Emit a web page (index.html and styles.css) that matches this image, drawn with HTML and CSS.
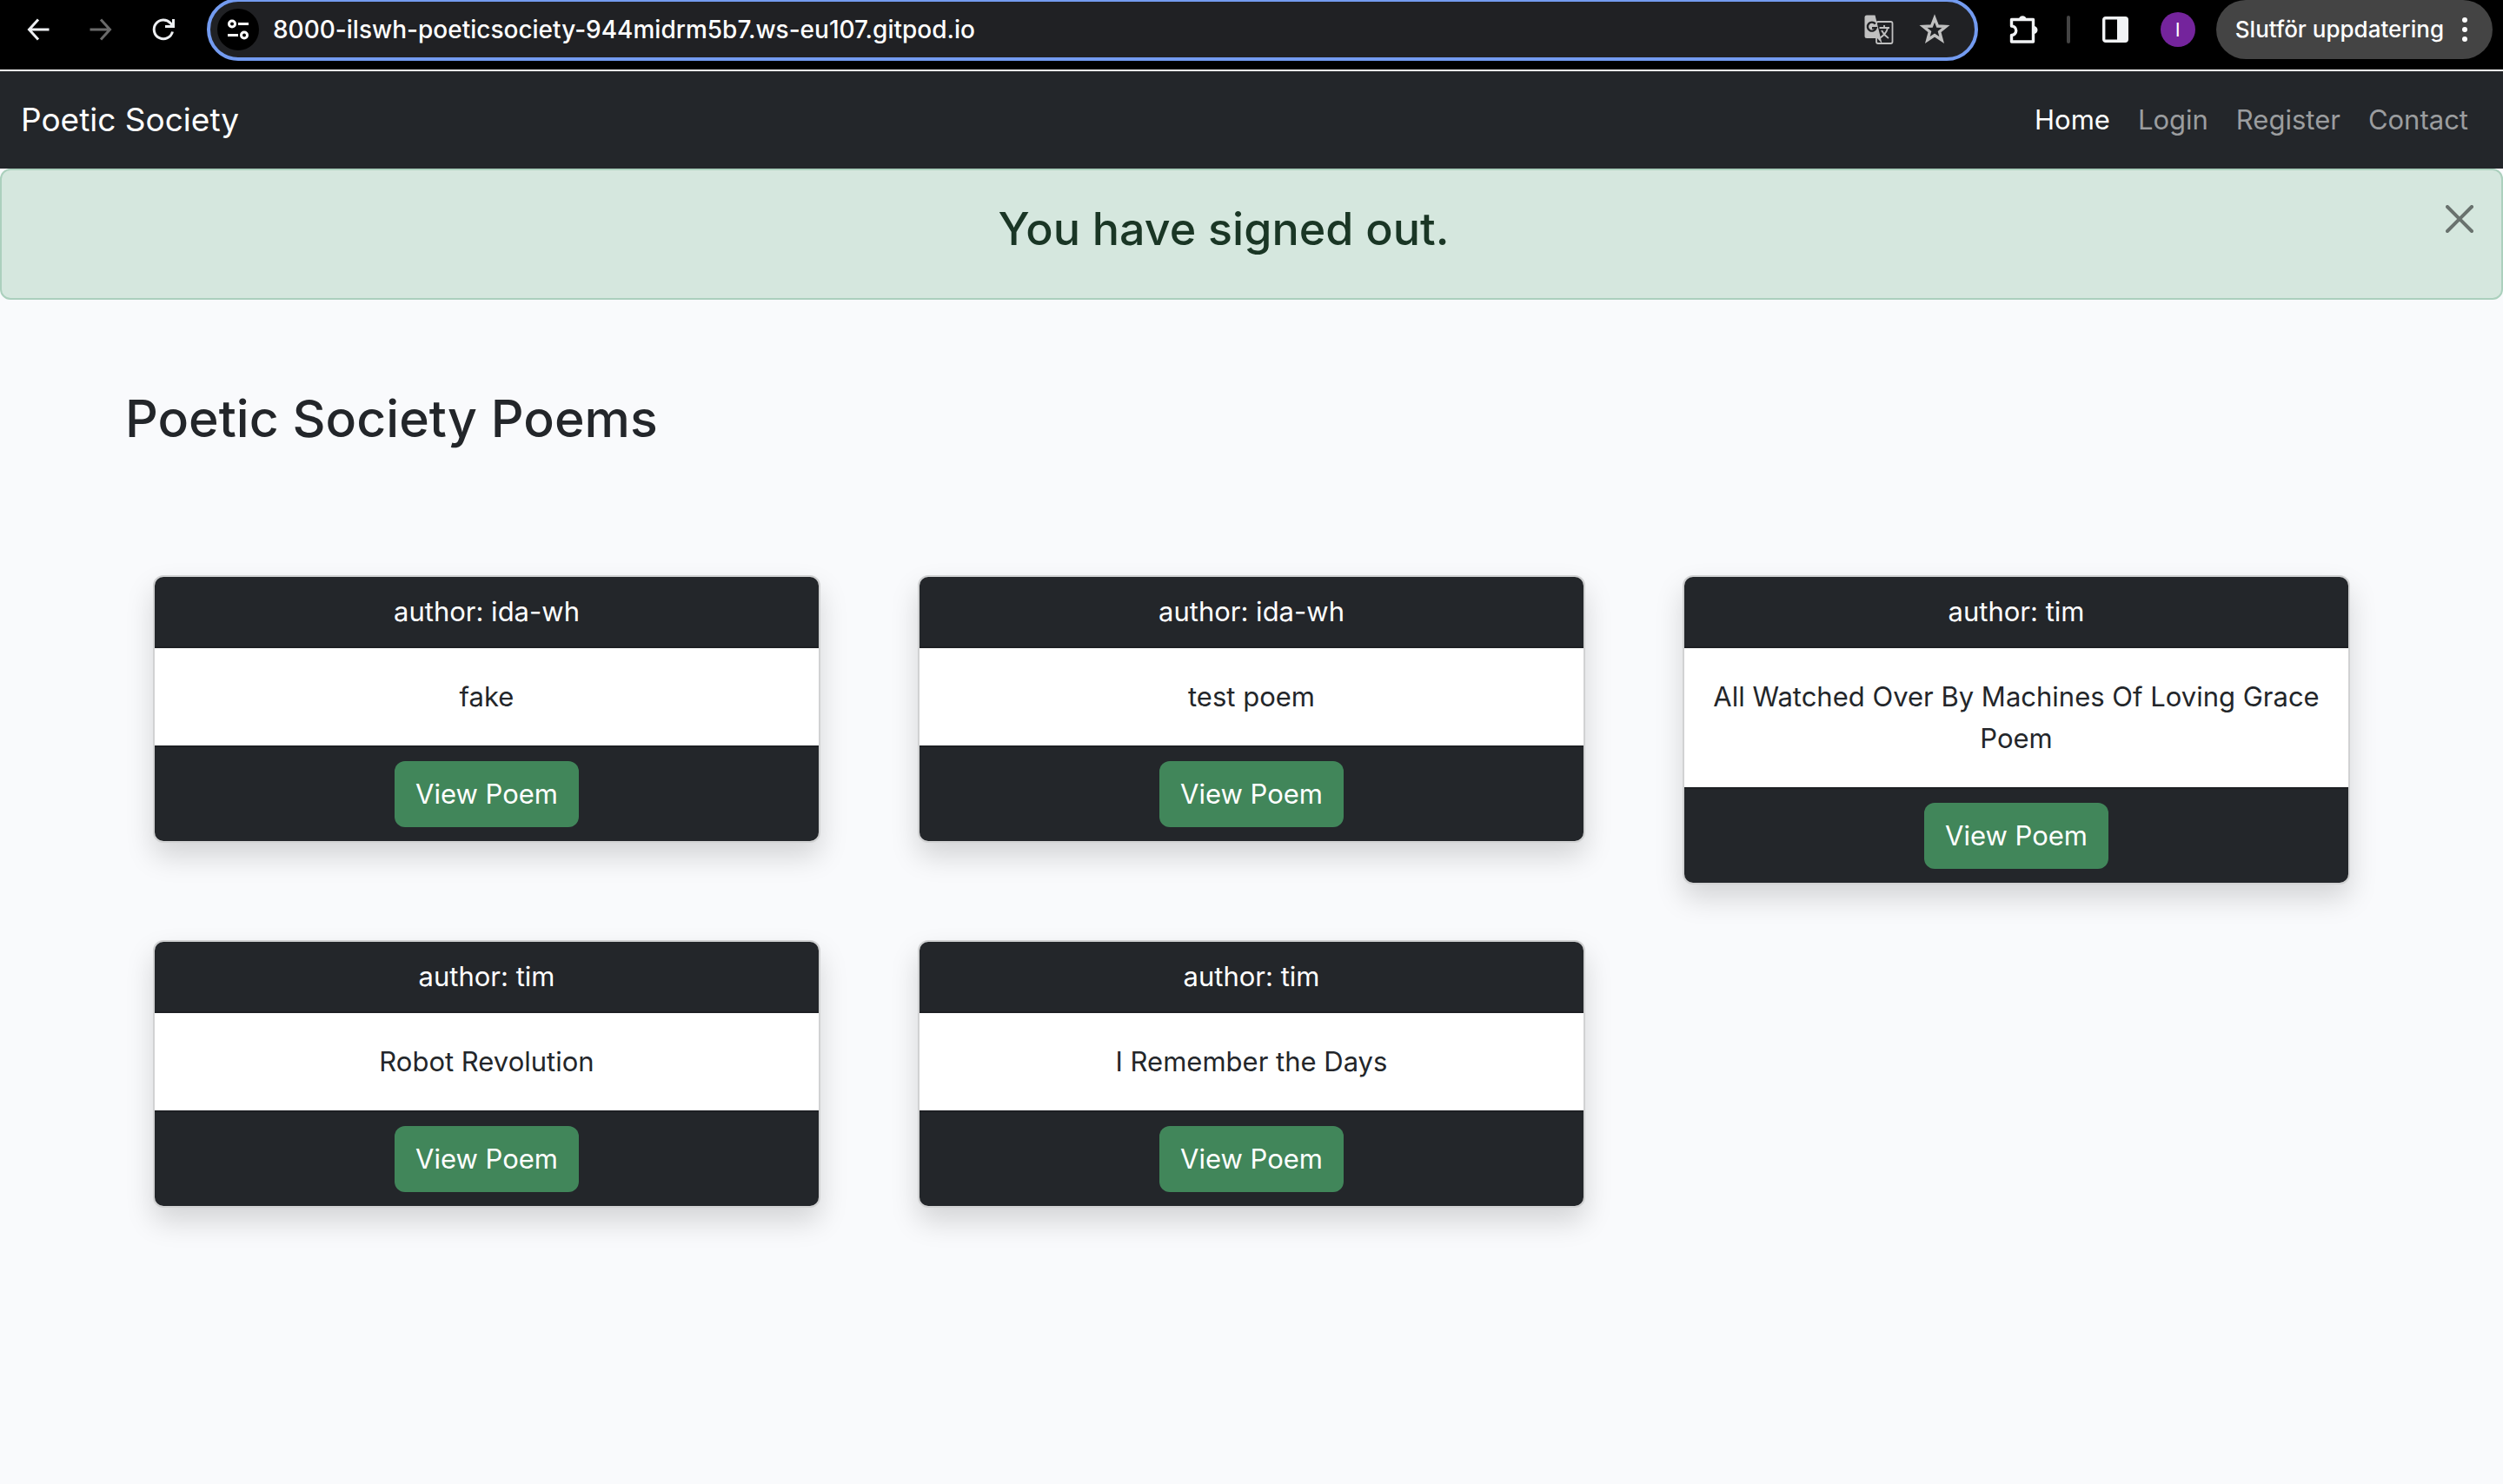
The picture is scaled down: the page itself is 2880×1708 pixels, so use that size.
FILE: index.html
```html
<!DOCTYPE html>
<html lang="en">
<head>
<meta charset="utf-8">
<title>Poetic Society</title>
<link rel="stylesheet" href="styles.css">
</head>
<body>
<div class="toolbar">
  <div class="history">
    <button class="icon-btn" aria-label="Back"><svg width="32" height="32" viewBox="0 0 32 32" fill="none" stroke="#eef0f3" stroke-width="3"><path d="M28.500 16H6M16 4.500 5.500 16 16 27.500"/></svg></button>
    <button class="icon-btn" aria-label="Forward" disabled><svg width="32" height="32" viewBox="0 0 32 32" fill="none" stroke="#6a6a6a" stroke-width="3"><path d="M3.500 16H26M16 4.500 26.500 16 16 27.500"/></svg></button>
    <button class="icon-btn" aria-label="Reload"><svg width="32" height="32" viewBox="0 0 32 32" fill="none" stroke="#eef0f3" stroke-width="3"><path d="M26.500 18.500A10.800 10.800 0 1 1 24 8.600L27 12M27.500 4V12.500H18"/></svg></button>
  </div>
  <div class="omnibox">
    <button class="site-info" aria-label="Site information"><svg width="28" height="28" viewBox="0 0 28 28" fill="none" stroke="#fff" stroke-width="3"><circle cx="7" cy="7.500" r="3.500"/><path d="M14 7.500H26M2 20.500H14"/><circle cx="21" cy="20.500" r="3.500"/></svg></button>
    <input class="address" type="text" aria-label="Address" value="8000-ilswh-poeticsociety-944midrm5b7.ws-eu107.gitpod.io">
    <button class="icon-btn" aria-label="Translate"><svg width="36" height="36" viewBox="0 0 36 36"><rect x="15" y="9" width="18.500" height="25" rx="2" fill="none" stroke="#c0c0c0" stroke-width="1.800"/><path d="M4 1.500H13.500L21.500 34 16 28H4A2.500 2.500 0 0 1 1.500 25.500V4A2.500 2.500 0 0 1 4 1.500Z" fill="#c0c0c0"/><path d="M13.800 11.500A5 5 0 1 0 14.600 16.300H10" fill="none" stroke="#202124" stroke-width="2.400"/><path d="M18.500 16H30M24 13V16M28 16C27 21 23 25 19.500 27.500M21 19C23 23 26 26 29 28" fill="none" stroke="#c0c0c0" stroke-width="1.800"/></svg></button>
    <button class="icon-btn" aria-label="Bookmark"><svg width="36" height="36" viewBox="0 0 36 36" fill="none" stroke="#c0c0c0" stroke-width="3.400"><path d="M18 5 21.500 14 31 14.400 23.600 20.500 26.200 30 18 24.600 9.800 30 12.400 20.500 5 14.400 14.500 14Z"/></svg></button>
  </div>
  <div class="actions">
    <button class="icon-btn" aria-label="Extensions"><svg width="36" height="36" viewBox="0 0 36 36"><path d="M4.500 6.500H29.500V32H4.500V24.500A4.600 4.600 0 0 0 4.500 14Z" fill="none" stroke="#f1f3f5" stroke-width="3.400" stroke-linejoin="round"/><path d="M13 6A4.300 4.300 0 0 1 21.500 6ZM30 14A4.500 4.500 0 0 1 30 23Z" fill="#f1f3f5"/></svg></button>
    <span class="divider"></span>
    <button class="icon-btn" aria-label="Side panel"><svg width="32" height="32" viewBox="0 0 32 32"><rect x="2.700" y="2.700" width="26.600" height="26.600" rx="2" fill="none" stroke="#f1f3f5" stroke-width="3.400"/><path d="M18 2H30V30H18Z" fill="#f1f3f5"/></svg></button>
    <button class="avatar" aria-label="Profile">I</button>
  </div>
  <button class="update">Slutför uppdatering<svg width="8" height="32" viewBox="0 0 8 32" fill="#fff"><circle cx="4" cy="5" r="3"/><circle cx="4" cy="16" r="3"/><circle cx="4" cy="27" r="3"/></svg></button>
</div>

<nav class="navbar">
  <a class="brand" href="#">Poetic Society</a>
  <ul class="nav-links">
    <li><a class="active" href="#">Home</a></li>
    <li><a href="#">Login</a></li>
    <li><a href="#">Register</a></li>
    <li><a href="#">Contact</a></li>
  </ul>
</nav>

<div class="alert" role="alert">
  <h2>You have signed out.</h2>
  <button class="close" aria-label="Close"><svg width="32" height="32" viewBox="0 0 16 16"><path d="M.293.293a1 1 0 0 1 1.414 0L8 6.586 14.293.293a1 1 0 1 1 1.414 1.414L9.414 8l6.293 6.293a1 1 0 0 1-1.414 1.414L8 9.414l-6.293 6.293a1 1 0 0 1-1.414-1.414L6.586 8 .293 1.707a1 1 0 0 1 0-1.414z"/></svg></button>
</div>

<main>
  <h1>Poetic Society Poems</h1>
  <div class="cards">
    <article class="card">
      <header>author: ida-wh</header>
      <p>fake</p>
      <footer><a class="btn" href="#">View Poem</a></footer>
    </article>
    <article class="card">
      <header>author: ida-wh</header>
      <p>test poem</p>
      <footer><a class="btn" href="#">View Poem</a></footer>
    </article>
    <article class="card">
      <header>author: tim</header>
      <p>All Watched Over By Machines Of Loving Grace Poem</p>
      <footer><a class="btn" href="#">View Poem</a></footer>
    </article>
    <article class="card">
      <header>author: tim</header>
      <p>Robot Revolution</p>
      <footer><a class="btn" href="#">View Poem</a></footer>
    </article>
    <article class="card">
      <header>author: tim</header>
      <p>I Remember the Days</p>
      <footer><a class="btn" href="#">View Poem</a></footer>
    </article>
  </div>
</main>
</body>
</html>
```
FILE: styles.css
```css
* {
  box-sizing: border-box;
}

body {
  margin: 0;
  background: #f9fafc;
  color: #23262a;
  font-family: Inter, "Liberation Sans", sans-serif;
  font-size: 31px;
  line-height: 48px;
}

button,
input {
  margin: 0;
  padding: 0;
  border: 0;
  background: none;
  color: inherit;
  font: inherit;
}

svg {
  display: block;
}

a {
  color: inherit;
  text-decoration: none;
}

/* Browser toolbar */
.toolbar {
  display: flex;
  align-items: flex-start;
  height: 82px;
  background: #000;
  border-bottom: 2px solid #fff;
  color: #fff;
}

.history {
  display: flex;
  align-items: center;
  gap: 40px;
  height: 68px;
  padding: 0 34px 0 28px;
}

.omnibox {
  display: flex;
  flex: 1;
  align-items: center;
  gap: 28px;
  height: 72px;
  margin-top: -2px;
  padding: 0 28px 0 8px;
  border: 4px solid #739bf0;
  border-radius: 36px;
  background: #202124;
}

.site-info {
  display: grid;
  place-items: center;
  width: 48px;
  height: 48px;
  border-radius: 50%;
  background: #000;
}

.address {
  flex: 1;
  margin-left: -12px;
  font-size: 28px;
  font-weight: 500;
  outline: none;
}

.actions {
  display: flex;
  align-items: center;
  gap: 36px;
  height: 68px;
  padding: 0 24px 0 34px;
}

.divider {
  width: 4px;
  height: 32px;
  margin-left: -4px;
  border-radius: 2px;
  background: #444;
}

.avatar {
  width: 40px;
  height: 40px;
  border-radius: 50%;
  background: #74249c;
  font-size: 22px;
  line-height: 40px;
}

.update {
  display: flex;
  align-items: center;
  gap: 20px;
  height: 68px;
  margin-right: 12px;
  padding: 0 28px 0 22px;
  border-radius: 34px;
  background: #444;
  font-size: 26px;
  font-weight: 500;
}

/* Site navigation */
.navbar {
  display: flex;
  align-items: center;
  justify-content: space-between;
  height: 112px;
  padding: 0 24px;
  background: #23262a;
  color: #fff;
}

.brand {
  font-size: 37px;
}

.nav-links {
  display: flex;
  margin: 0;
  padding: 0;
  list-style: none;
}

.nav-links a {
  padding: 16px;
  color: #9b9d9f;
}

.nav-links .active {
  color: #fff;
}

/* Flash message */
.alert {
  position: relative;
  padding: 34px 96px 46px 32px;
  border: 2px solid #abd0bd;
  border-radius: 12px;
  background: #d5e7de;
  color: #1a3625;
  text-align: center;
}

.alert h2 {
  margin: 0;
  font-size: 52px;
  font-weight: 500;
  line-height: 67px;
}

.close {
  position: absolute;
  top: 0;
  right: 0;
  padding: 40px 32px;
  opacity: 0.5;
}

/* Poem list */
h1 {
  margin: 98px 144px 142px;
  font-size: 59px;
  font-weight: 500;
  line-height: 77px;
}

.cards {
  display: grid;
  grid-template-columns: repeat(3, minmax(0, 1fr));
  align-items: start;
  gap: 64px 112px;
  padding: 0 176px 64px;
}

.card {
  overflow: hidden;
  border: 2px solid #d1d2d3;
  border-radius: 12px;
  background: #fff;
  box-shadow: 0 16px 32px rgba(0, 0, 0, 0.15);
  text-align: center;
}

.card header {
  padding: 16px 32px;
  border-bottom: 2px solid #1d1f23;
  background: #23262a;
  color: #fff;
}

.card p {
  margin: 0;
  padding: 32px;
}

.card footer {
  display: flex;
  justify-content: center;
  padding: 16px 32px;
  border-top: 2px solid #1d1f23;
  background: #23262a;
}

.btn {
  padding: 14px 24px;
  border-radius: 12px;
  background: #41865a;
  color: #fff;
}
```
